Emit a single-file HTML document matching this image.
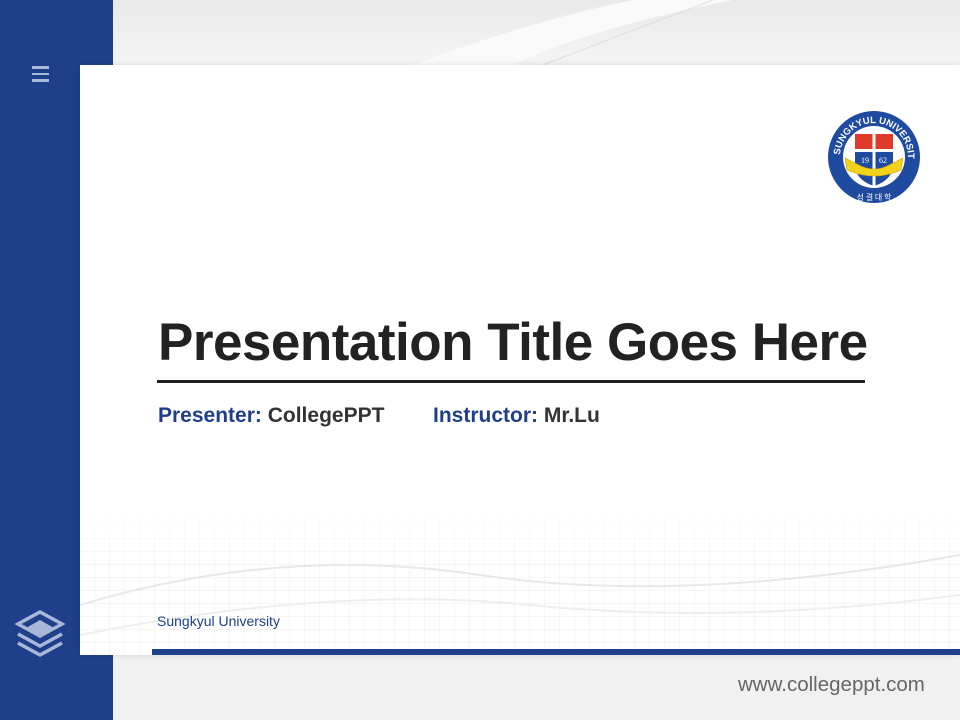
<!DOCTYPE html>
<html><head><meta charset="utf-8"><style>
html,body{margin:0;padding:0;width:960px;height:720px;overflow:hidden;background:#f0f0f0;font-family:"Liberation Sans",Arial,sans-serif}
.bg{position:absolute;left:0;top:0;width:960px;height:720px;background:linear-gradient(180deg,#e9e9e9 0,#f4f4f4 60px,#f1f1f1 100%)}
.side{position:absolute;left:0;top:0;width:113px;height:720px;background:#1e3f8a}
.card{position:absolute;left:80px;top:65px;width:880px;height:590px;background:#fff;overflow:hidden;box-shadow:0 0 6px rgba(0,0,0,.12)}
.wave{position:absolute;left:0;top:430px;width:880px;height:160px;background:
repeating-linear-gradient(90deg,rgba(0,0,0,0) 0 14px,rgba(190,190,190,.13) 14px 15px),
repeating-linear-gradient(0deg,rgba(0,0,0,0) 0 12px,rgba(190,190,190,.13) 12px 13px);
-webkit-mask:linear-gradient(180deg,transparent,#000 40%);mask:linear-gradient(180deg,transparent,#000 40%)}
.title{position:absolute;left:158px;top:312px;font-size:53px;font-weight:bold;color:#222;letter-spacing:-0.5px;white-space:nowrap}
.rule{position:absolute;left:157px;top:380px;width:708px;height:3px;background:#222}
.pres{position:absolute;top:404px;font-size:21px;font-weight:bold;color:#333;white-space:nowrap}
.pres b{color:#1e3f8a}
.uni{position:absolute;left:157px;top:613px;font-size:14px;color:#1e3f8a}
.bar{position:absolute;left:152px;top:649px;width:808px;height:6px;background:#1e3f8a}
.url{position:absolute;left:738px;top:673px;font-size:20.5px;color:#666}
.menu{position:absolute;left:32px;top:66px;width:17px}
.menu i{display:block;height:2.5px;background:#a9b7d8;margin-bottom:4px}
</style></head><body>
<div class="bg"></div>
<svg style="position:absolute;left:113px;top:0" width="847" height="65"><path d="M300 65 Q420 20 520 0 L620 0 Q470 30 400 65Z" fill="#fafafa"/><path d="M430 65 Q520 30 600 0" stroke="#ddd" fill="none"/></svg>
<div class="side"></div>
<div class="menu"><i></i><i></i><i></i></div>
<svg style="position:absolute;left:14px;top:610px" width="52" height="48" viewBox="0 0 52 48">
<path d="M26 2 L48 14 L26 26 L4 14Z" fill="none" stroke="#a9b7d8" stroke-width="3.5"/>
<path d="M12 18 L26 10 L40 18 L26 24Z" fill="#a9b7d8"/>
<path d="M4 24 L26 36 L48 24" fill="none" stroke="#a9b7d8" stroke-width="3.5"/>
<path d="M4 33 L26 45 L48 33" fill="none" stroke="#a9b7d8" stroke-width="3.5"/>
</svg>
<div class="card">
<div class="wave"></div>
<svg style="position:absolute;left:0;top:420px" width="880" height="170"><path d="M0 120 Q200 60 400 90 T880 70" stroke="#e8e8e8" stroke-width="2" fill="none"/><path d="M0 150 Q250 100 450 120 T880 110" stroke="#eeeeee" stroke-width="2" fill="none"/></svg>
</div>
<svg style="position:absolute;left:825px;top:108px" width="98" height="98" viewBox="0 0 98 98">
<circle cx="49" cy="49" r="48" fill="#fff"/>
<circle cx="49" cy="49" r="46" fill="#1e4aa0"/>
<circle cx="49" cy="49" r="31" fill="#fff"/>
<defs><path id="arc" d="M15 49 A34 34 0 0 1 83 49"/></defs>
<text font-size="9.5" font-weight="bold" fill="#fff" font-family="Liberation Sans"><textPath href="#arc" startOffset="2">SUNGKYUL UNIVERSITY</textPath></text>
<text x="49" y="92" font-size="8" fill="#fff" text-anchor="middle" font-family="Noto Sans CJK KR,sans-serif">성 결 대 학</text>
<path d="M30 26 L68 26 L68 56 Q68 72 49 78 Q30 72 30 56Z" fill="#1e4aa0"/>
<rect x="30" y="26" width="38" height="16" fill="#e03a2a"/>
<rect x="47.5" y="26" width="3" height="52" fill="#fff"/>
<rect x="30" y="41" width="38" height="3" fill="#fff"/>
<text x="40" y="55" font-size="8" fill="#fff" text-anchor="middle" font-family="Liberation Serif">19</text>
<text x="58" y="55" font-size="8" fill="#fff" text-anchor="middle" font-family="Liberation Serif">62</text>
<path d="M20 50 L32 56 Q49 66 66 56 L78 50 L76 62 Q49 74 22 62Z" fill="#f3d21c" stroke="#c9a400" stroke-width=".6"/>
</svg>
<div class="title">Presentation Title Goes Here</div>
<div class="rule"></div>
<div class="pres" style="left:158px"><b>Presenter:</b> CollegePPT</div>
<div class="pres" style="left:433px"><b>Instructor:</b> Mr.Lu</div>
<div class="uni">Sungkyul University</div>
<div class="bar"></div>
<div class="url">www.collegeppt.com</div>
</body></html>
